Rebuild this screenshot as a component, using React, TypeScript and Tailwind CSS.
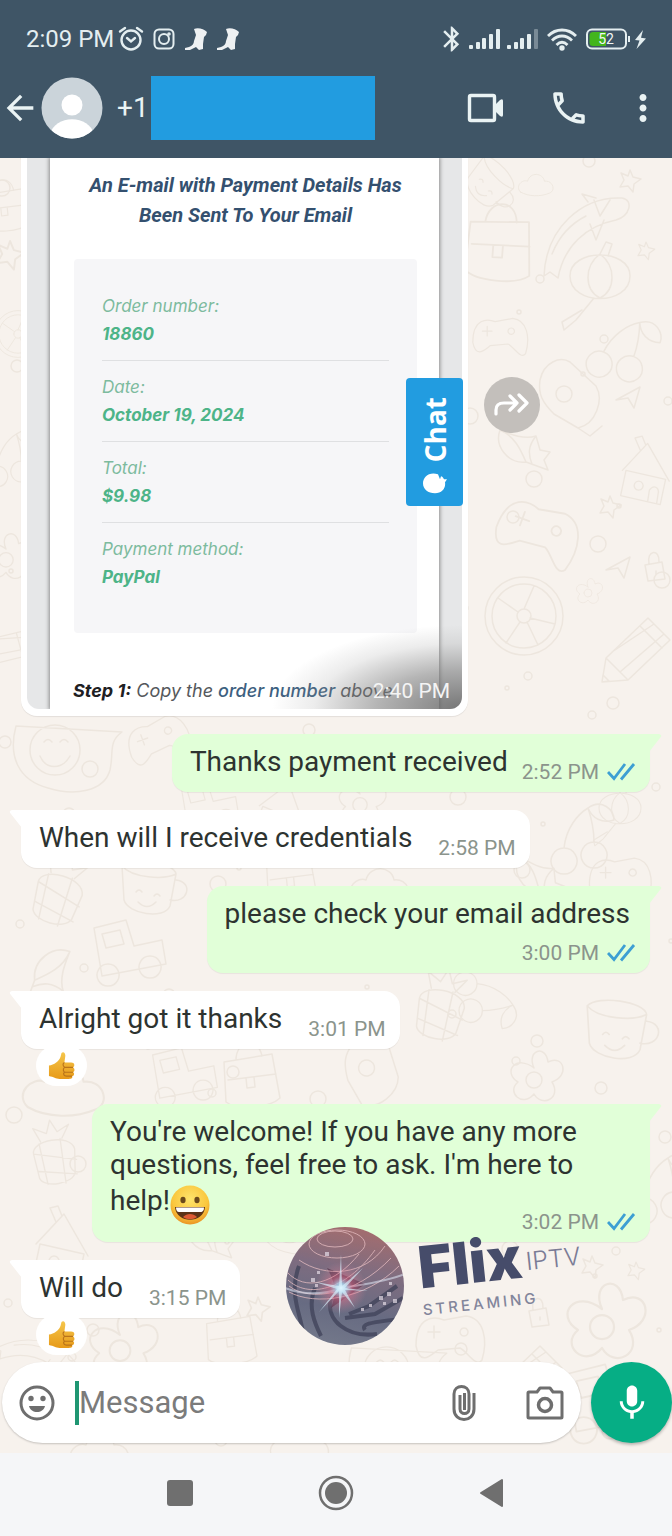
import type { ReactNode } from 'react';
import { MdArrowBack, MdBluetooth, MdMic, MdMoreVert, MdOutlinePhone } from 'react-icons/md';
import clsx from 'clsx';

type Message = {
  text: string;
  time: string;
  from: 'me' | 'them';
  layout?: 'inline' | 'below' | 'overlap';
  reaction?: boolean;
  smile?: boolean;
};

const messages: Message[] = [
  { text: 'Thanks payment received', time: '2:52 PM', from: 'me' },
  { text: 'When will I receive credentials', time: '2:58 PM', from: 'them' },
  { text: 'please check your email address', time: '3:00 PM', from: 'me', layout: 'below' },
  { text: 'Alright got it thanks', time: '3:01 PM', from: 'them', reaction: true },
  {
    text: "You're welcome! If you have any more questions, feel free to ask. I'm here to help!",
    time: '3:02 PM',
    from: 'me',
    layout: 'overlap',
    smile: true,
  },
  { text: 'Will do', time: '3:15 PM', from: 'them', reaction: true },
];

const order = [
  { label: 'Order number:', value: '18860' },
  { label: 'Date:', value: 'October 19, 2024' },
  { label: 'Total:', value: '$9.98' },
  { label: 'Payment method:', value: 'PayPal' },
];

// Line doodles for the wallpaper, each drawn around 0,0
const doodles: Record<string, string> = {
  fish: 'M-38 42 C-36 -6 0 -38 40 -36 C52 -34 48 -18 34 -14 C4 -8 -18 12 -24 44 L-32 38Z M6 -32 L0 -40 L14 -36 M22 -14 L14 6 L8 -10 M12 -34 L18 -18 L28 -34 M-30 20 C-22 0 -8 -12 4 -18',
  pumpkin: 'M-30 0 C-30 -28 30 -28 30 0 C30 30 -30 30 -30 0Z M0 -22 C-16 -10 -16 14 0 22 M0 -22 C16 -10 16 14 0 22 M0 -22 L6 -34 L12 -32 L8 -20 M-6 22 L-24 44 L-36 54 L-38 46 L-18 34',
  mask: 'M-28 -14 C-24 -32 -8 -38 2 -32 L28 -8 C36 6 28 30 10 34 L-14 20 C-26 8 -30 0 -28 -14Z M10 34 L22 42 L34 32 M-4 0 m-8 0 a8 8 0 1 0 16 0 a8 8 0 1 0 -16 0',
  house: 'M-24 -4 L4 -34 L28 8 M-20 -4 L-26 24 L18 34 L24 6 L-20 -4Z M-6 8 a5 5 0 1 0 .1 0Z M4 31 L6 18 C10 12 16 14 16 20 L14 33 M-4 -26 L-10 -40 L-2 -42 L2 -32',
  wheel: 'M-39 0 a39 39 0 1 0 78 0 a39 39 0 1 0 -78 0 M-32 0 a32 32 0 1 0 64 0 a32 32 0 1 0 -64 0 M-7 0 a7 7 0 1 0 14 0 a7 7 0 1 0 -14 0 M-6 -4 L-26 -18 M0 -7 L10 -30 M6 2 L31 8 M3 6 L14 29 M-4 6 L-18 27',
  pencil: 'M-34 32 L-30 8 L12 -32 L34 -10 L-8 30 L-34 32Z M-30 8 L-8 30 M4 -24 L26 -2 M-24 2 L18 -26 M-16 22 L28 -16 M-34 32 L-33 25 L-27 31Z',
  smiley: 'M-54 -28 L52 -22 C38 -12 44 -2 40 16 C34 38 4 42 -22 34 C-52 26 -62 2 -54 -28Z M-40 -4 a25 25 0 1 0 50 0 a25 25 0 1 0 -50 0 M-30 2 C-24 16 -8 16 0 2 M-26 -12 q4 -5 8 0 M-10 -12 q4 -5 8 0',
  controller: 'M-34 8 C-34 -22 -16 -22 -6 -18 L16 -22 C34 -20 38 2 32 22 C26 30 18 14 10 10 L-12 12 C-20 18 -30 28 -34 8Z M-22 -6 L-10 -6 M-16 -12 L-16 0 M14 -10 a4 4 0 1 0 .1 0Z',
  pineapple: 'M-22 -6 C-22 -22 22 -22 24 -4 L20 22 C16 34 -16 34 -20 22Z M-22 -6 L24 8 M-20 14 L22 24 M-14 -16 L-12 30 M10 -18 L8 32 M-12 -18 L-18 -34 L-4 -26 L2 -40 L8 -26 L22 -32 L12 -18',
  cup: 'M-28 -22 C-18 -32 24 -26 26 -14 L20 18 C14 32 -22 26 -26 12Z M-28 -22 C-18 -10 14 -8 26 -14 M26 -8 C44 -6 38 16 20 12 M-14 4 q3 -4 6 0 M4 8 q3 -4 6 0 M-12 14 C-6 20 0 20 6 14',
  bag: 'M-26 -16 L22 -24 L30 20 C20 30 -14 32 -24 24Z M-14 -18 C-14 -38 8 -42 12 -22 M-22 2 L26 -4 M-4 0 L-3 10 L5 9 L4 -1',
  flower: 'M0 -10 C-8 -28 12 -34 14 -16 C30 -24 36 -2 18 4 C28 20 8 30 0 16 C-12 30 -28 14 -16 4 C-32 -6 -18 -24 0 -10Z M-8 2 a8 8 0 1 0 16 0 a8 8 0 1 0 -16 0',
  cherry: 'M-16 10 a13 13 0 1 0 .1 0Z M14 4 a13 13 0 1 0 .1 0Z M-16 10 C-14 -10 -2 -24 8 -30 C12 -18 14 -8 14 4 M8 -30 C22 -40 34 -28 34 -18 C22 -14 12 -20 8 -30',
  bulldozer: 'M-36 -20 L-4 -28 L4 -2 L32 -8 L36 16 L-28 28Z M-22 16 a11 11 0 1 0 .1 0Z M20 8 a11 11 0 1 0 .1 0Z M-28 -14 L-10 -18 L-6 -4 L-24 0Z',
  cloud: 'M-26 10 C-36 0 -22 -12 -14 -8 C-10 -24 12 -22 14 -8 C28 -10 34 8 22 12 C8 18 -12 18 -26 10Z',
  shell: 'M-24 -18 C-30 -2 -16 16 2 14 L24 22 L20 12 L26 4 L16 2 L12 -12 C0 -8 -14 -14 -24 -18Z M-24 -18 C-10 -12 -4 0 2 14 M12 -12 C4 -2 4 6 8 16',
  star: 'M0 -10 L3 -3 L11 -1 L4 4 L3 12 L-2 6 L-10 7 L-6 0 L-9 -7 L-2 -4Z',
  lock: 'M-9 -3 L8 -6 L11 11 L-6 13Z M-5 -4 C-8 -18 6 -20 5 -6 M2 3 l0 3',
  plane: 'M-12 4 L12 -9 L6 12 L0 2Z',
};

const placed: [string, number, number, number, number][] = [
  ['fish', 582, 76, 0, 1], ['pumpkin', 600, 118, 0, 1], ['mask', 568, 236, 0, 1], ['house', 644, 316, 0, 0.9],
  ['wheel', 524, 458, 0, 1], ['pencil', 636, 492, 0, 1], ['bag', 498, 88, 10, 1.2], ['controller', 500, 178, 0, 0.8],
  ['cherry', 622, 190, 20, 1], ['shell', 524, 290, 0, 1], ['controller', 538, 374, 20, 1.2], ['cloud', 536, 28, 0, 0.6],
  ['lock', 654, 410, 0, 1], ['plane', 628, 238, 0, 1], ['plane', 618, 408, 0, 1], ['flower', 588, 434, 0, 0.5],
  ['star', 610, 348, 0, 1], ['star', 630, 22, 0, 1], ['star', 646, 92, 0, 0.8], ['cup', 490, 26, 40, 0.8],
  ['smiley', 70, 596, 0, 1], ['bag', 4, 50, 0, 0.8], ['star', 10, 96, 0, 1.3], ['wheel', 18, 176, 0, 0.6],
  ['cherry', 10, 300, 0, 0.8], ['flower', 6, 400, 0, 0.9], ['pencil', 4, 490, 30, 0.8], ['controller', 158, 582, -20, 0.9],
  ['bulldozer', 210, 645, 0, 0.8], ['pineapple', 58, 735, 15, 1], ['cup', 150, 730, 0, 1], ['bulldozer', 130, 790, 0, 1],
  ['shell', 50, 820, 90, 1.1], ['house', 280, 655, 10, 0.9], ['flower', 360, 645, 0, 0.9], ['cherry', 580, 680, 0, 1],
  ['pumpkin', 620, 650, 0, 0.7], ['shell', 540, 720, 10, 1], ['controller', 620, 720, 0, 0.9], ['bag', 290, 720, 0, 0.9],
  ['cloud', 380, 730, 0, 1], ['cup', 618, 872, 0, 1.1], ['flower', 534, 920, 0, 1], ['cherry', 486, 840, 90, 0.9],
  ['pineapple', 440, 850, 10, 1], ['mask', 370, 912, 30, 1], ['bag', 250, 920, 0, 1], ['bulldozer', 185, 915, 0, 0.9],
  ['cloud', 64, 935, 0, 1.4], ['pineapple', 54, 998, -10, 0.9], ['house', 60, 1090, 0, 1], ['star', 258, 1150, 0, 1.1],
  ['smiley', 300, 1070, 0, 0.7], ['shell', 210, 1080, 0, 0.9], ['flower', 120, 1190, 0, 1.3], ['bag', 230, 1180, 0, 0.9],
  ['flower', 602, 1166, 0, 1.5], ['star', 592, 1108, 0, 1], ['star', 636, 1112, 0, 0.8], ['lock', 538, 1156, 0, 1],
  ['cherry', 660, 1030, 0, 1], ['controller', 450, 1180, 0, 1], ['smiley', 400, 1215, 0, 0.9], ['pencil', 528, 1220, 0, 1],
  ['bulldozer', 610, 1240, 0, 1.2], ['fish', 40, 1200, 60, 0.8], ['cloud', 300, 1290, 0, 1], ['cloud', 100, 1295, 0, 1],
];

const dots = Array.from({ length: 120 }, (_, i) => ({
  x: (i * 149 + 23) % 672,
  y: (i * 83 + ((i * i) % 31)) % 1300,
  r: 2 + (i % 4) * 2,
}));

function Wallpaper() {
  return (
    <svg className="absolute inset-0 h-full w-full" viewBox="0 0 672 1295" preserveAspectRatio="xMidYMin slice" fill="none" aria-hidden="true">
      <g stroke="#ede6de" strokeWidth="1.5" strokeLinejoin="round" strokeLinecap="round">
        {placed.map(([name, x, y, r, s], i) => (
          <path key={i} d={doodles[name]} transform={`translate(${x} ${y}) rotate(${r}) scale(${s})`} />
        ))}
        {dots.map((d, i) => (
          <circle key={i} cx={d.x} cy={d.y} r={d.r} />
        ))}
      </g>
    </svg>
  );
}

function Signal({ weak }: { weak?: boolean }) {
  return (
    <svg width="32" height="22" viewBox="0 0 32 22" fill="#e4eef0" aria-hidden="true">
      <rect x="0" y="17" width="4" height="4" rx="1" />
      <rect x="7" y="14" width="4" height="7" rx="1" />
      <rect x="13" y="10" width="4" height="11" rx="1" />
      <rect x="20" y="6" width="4" height="15" rx="1" />
      <rect x="27" y="1" width="4" height="20" rx="1" opacity={weak ? 0.35 : 1} />
    </svg>
  );
}

function Boot() {
  return (
    <svg width="22" height="24" viewBox="0 0 22 24" fill="#eef1f3" aria-hidden="true">
      <path d="M9 2 C13 0 19 2 22 5 L21 8 L19 10 L18 17 L18 22 L14 23 L11 20 L5 23 L0 23 L0 21 L4 20 C7 19 9 17 9 14 L11 8Z" />
    </svg>
  );
}

function StatusBar() {
  return (
    <div className="flex h-[76px] items-center justify-between pl-[26px] pr-[25px] pt-0.5 text-[#e4eef0]">
      <div className="flex items-center">
        <span className="text-2xl leading-[30px]">2:09 PM</span>
        <svg className="ml-1" width="26" height="26" viewBox="0 0 26 26" fill="none" stroke="currentColor" strokeWidth="2.4" strokeLinecap="round" aria-hidden="true">
          <circle cx="13" cy="14" r="9.5" />
          <path d="M9 12 L13 15.500 L17 12" />
          <path d="M2 5.500 L7 2 M24 5.500 L19 2" />
        </svg>
        <svg className="ml-[9px]" width="22" height="22" viewBox="0 0 22 22" fill="none" stroke="currentColor" strokeWidth="2" aria-hidden="true">
          <rect x="1.500" y="1.500" width="19" height="19" rx="4.500" />
          <circle cx="11" cy="11" r="5" />
          <circle cx="16" cy="6" r="0.800" />
        </svg>
        <div className="ml-2.5 flex gap-2.5">
          <Boot />
          <Boot />
        </div>
      </div>
      <div className="flex items-center">
        <MdBluetooth size={30} />
        <span className="ml-0.5 flex gap-1.5">
          <Signal />
          <Signal weak />
        </span>
        <svg className="ml-2" width="30" height="23" viewBox="0 0 30 23" fill="none" stroke="currentColor" strokeWidth="2.800" aria-hidden="true">
          <path d="M1 8 C9 0 21 0 29 8 M5 12.500 C11 6.500 19 6.500 25 12.500 M9.500 17 C13 13.500 17 13.500 20.500 17" />
          <circle cx="15" cy="20" r="1.300" fill="currentColor" />
        </svg>
        <svg className="ml-2" width="62" height="24" viewBox="0 0 62 24" aria-hidden="true">
          <rect x="2" y="2.500" width="39" height="19" rx="5" fill="none" stroke="#e4eef0" strokeWidth="2" />
          <path d="M8 5 H21 V19 H8 Q4.500 19 4.500 15.500 V8.500 Q4.500 5 8 5Z" fill="#43b51d" />
          <path d="M43 9 h2 v6 h-2z M58 3 L50 13 L54.500 13.500 L51.500 22 L61 11.500 L56 10.800Z" fill="#e4eef0" />
          <text x="21" y="17" textAnchor="middle" fontSize="14" fill="#f2f6f4">52</text>
        </svg>
      </div>
    </div>
  );
}

function AppBar() {
  return (
    <div className="flex h-16 items-center pr-2 text-[#eaf3f4]">
      <button type="button" aria-label="Back">
        <MdArrowBack size={40} />
      </button>
      <svg className="ml-px" width="62" height="62" viewBox="0 0 62 62" role="img" aria-label="Contact photo">
        <clipPath id="avatar"><circle cx="31" cy="31" r="30.500" /></clipPath>
        <g clipPath="url(#avatar)">
          <rect width="62" height="62" fill="#cbd4da" />
          <circle cx="31" cy="28" r="10.500" fill="#fff" />
          <path d="M9 58 C13 37 49 37 53 58 V62 H9Z" fill="#fff" />
        </g>
      </svg>
      <span className="ml-[14px] text-[28px] leading-8">+1</span>
      <div className="ml-0.5 h-16 w-56 bg-[#229ce0]" />
      <div className="ml-auto flex items-center">
        <button type="button" aria-label="Video call">
          <svg width="38" height="32" viewBox="0 0 38 32" fill="none" aria-hidden="true">
            <rect x="2.500" y="3.500" width="25" height="25" rx="1.500" stroke="currentColor" strokeWidth="3.400" />
            <path d="M28 13 L33 8 Q36 6 36 9 V23 Q36 26 33 24 L28 19Z" fill="currentColor" />
          </svg>
        </button>
        <button type="button" aria-label="Call" className="ml-[43px]">
          <MdOutlinePhone size={42} />
        </button>
        <button type="button" aria-label="More options" className="ml-8">
          <MdMoreVert size={42} />
        </button>
      </div>
    </div>
  );
}

function PaymentPhoto() {
  return (
    <div className="relative w-[447px] rounded-b-2xl bg-white px-1.5 pb-[7px] shadow-[0_1px_1px_rgba(0,0,0,0.08)]">
      <div className="relative overflow-hidden rounded-b-xl bg-[#e6e7e8] px-[23px] font-['Inter','Roboto',sans-serif]">
        <div className="bg-white pb-1 pl-6 pr-[22px] pt-3 shadow-[0_0_4px_1px_rgba(0,0,0,0.4)]">
          <h2 className="text-center font-['Roboto',sans-serif] text-xl font-bold italic leading-[30px] text-[#34506f]">
            An E-mail with Payment Details Has Been Sent To Your Email
          </h2>
          <dl className="mt-[29px] rounded bg-[#f6f6f8] px-7 pb-[42px] pt-[33px]">
            {order.map((row, i) => (
              <div key={row.label} className={clsx('text-[17px] italic leading-7', i < order.length - 1 && 'mb-3 border-b border-[#dfe0e2] pb-3')}>
                <dt className="text-[#7dbb9e]">{row.label}</dt>
                <dd className="font-bold text-[#4db488]">{row.value}</dd>
              </div>
            ))}
          </dl>
          <p className="-mx-px mt-11 whitespace-nowrap text-lg italic leading-7 text-[#55585c]">
            <strong className="text-[#1e2023]">Step 1:</strong> Copy the <span className="font-medium text-[#3d5f80]">order number</span> above
          </p>
        </div>
        <div className="absolute inset-0 bg-[radial-gradient(ellipse_190px_84px_at_bottom_right,rgba(90,90,90,0.8)_0%,rgba(120,120,120,0.55)_45%,rgba(150,150,150,0.18)_78%,rgba(160,160,160,0)_100%)]" />
        <time className="absolute bottom-1.5 right-3 font-['Roboto',sans-serif] text-[21px] leading-6 text-[#f4f4f4]">2:40 PM</time>
      </div>
      <button type="button" className="absolute right-[5px] top-[220px] flex h-32 w-[57px] items-center justify-center rounded bg-[#229ce0] pt-2 text-white">
        <span className="flex rotate-180 items-center gap-2.5 font-['Open_Sans','Noto_Sans',sans-serif] text-[28px] font-bold leading-10 [writing-mode:vertical-rl]">
          <svg width="24" height="22" viewBox="0 0 24 22" fill="currentColor" aria-hidden="true">
            <path d="M12 1 C5 1 1 6 2 12 L0 15 L3 15 C4 17 5 18 6 18 L7 15 L9 20 C18 23 24 17 24 11 C24 5 19 1 12 1Z" />
          </svg>
          Chat
        </span>
      </button>
    </div>
  );
}

function ForwardButton() {
  return (
    <button type="button" aria-label="Forward" className="mt-[219px] flex h-14 w-14 items-center justify-center rounded-full bg-[#c3bfbb] text-white">
      <svg width="36" height="24" viewBox="0 0 36 24" fill="none" stroke="currentColor" strokeWidth="3.200" strokeLinecap="round" strokeLinejoin="round" aria-hidden="true">
        <path d="M2 21 V17 C2 11 6 10 10 10 H23 M16 3 L23 10 L16 17 M25 2 L33 10 L25 18" />
      </svg>
    </button>
  );
}

function ThumbsUp() {
  return (
    <svg width="27" height="29" viewBox="0 0 28 30" aria-label="Thumbs up" role="img">
      <defs>
        <linearGradient id="thumb" x1="0" y1="0" x2="0" y2="1">
          <stop offset="0" stopColor="#f5c64b" />
          <stop offset="1" stopColor="#e79a19" />
        </linearGradient>
      </defs>
      <path d="M1 15 C6 15 12 10 13 6 L14 2 C16 0 18 2 18 5 L17 12 H24 C28 12 28 16 26 17 C28 18 28 21 26 22 C28 23 27 26 25 26 C26 29 23 29 21 29 H12 C8 29 6 27 1 26Z" fill="url(#thumb)" />
      <path d="M17 12 C15 13 15 16 18 17 H26 M17 17 C15 19 16 22 18 22 H26 M17 22 C15 24 17 26 19 26 H25" fill="none" stroke="#b9731a" strokeWidth="1.200" />
    </svg>
  );
}

function Grin() {
  return (
    <svg className="mt-1 inline-block align-middle" width="40" height="40" viewBox="0 0 40 40" role="img" aria-label="Grinning face">
      <defs>
        <radialGradient id="grin" cx="0.500" cy="0.350" r="0.650">
          <stop offset="0" stopColor="#fde46c" />
          <stop offset="0.700" stopColor="#fac63c" />
          <stop offset="1" stopColor="#ea9325" />
        </radialGradient>
      </defs>
      <circle cx="20" cy="20" r="19.500" fill="url(#grin)" />
      <ellipse cx="13" cy="15" rx="2.600" ry="3.200" fill="#6b4a1c" />
      <ellipse cx="27" cy="15" rx="2.600" ry="3.200" fill="#6b4a1c" />
      <path d="M5 22 H35 C34 39 6 39 5 22Z" fill="#5c3318" />
      <path d="M6 22.500 H34 C34 26 32 27 31 27 H9 C7 27 6 25 6 22.500Z" fill="#fff" />
      <path d="M13 32 C17 28 23 28 27 32 C23 35 17 35 13 32Z" fill="#dd5a34" />
    </svg>
  );
}

function Ticks() {
  return (
    <svg width="29" height="20" viewBox="0 0 29 20" fill="none" stroke="#3d9fd3" strokeWidth="2.800" aria-hidden="true">
      <path d="M1 10 L7 16.500 L18 2 M14 17.500 L27 2" />
    </svg>
  );
}

function Bubble({ mine, children }: { mine: boolean; children: ReactNode }) {
  return (
    <div
      className={clsx(
        'relative rounded-2xl pb-[7px] pl-[18px] pr-3.5 pt-[11px] shadow-[0_1px_1px_rgba(0,0,0,0.06)]',
        mine ? 'rounded-tr-none bg-[#e1ffd8]' : 'rounded-tl-none bg-white',
      )}
    >
      <svg
        className={clsx('absolute top-0', mine ? '-right-3 text-[#e1ffd8]' : '-left-3 -scale-x-100 text-white')}
        width="13"
        height="18"
        viewBox="0 0 13 18"
        fill="currentColor"
        aria-hidden="true"
      >
        <path d="M0 0 H10 Q14 1 11 4 L0 18Z" />
      </svg>
      {children}
    </div>
  );
}

function MessageRow({ message }: { message: Message }) {
  const { layout = 'inline' } = message;
  const mine = message.from === 'me';
  return (
    <li className={clsx('flex max-w-[558px] flex-col', mine ? 'items-end self-end' : 'items-start')}>
      <Bubble mine={mine}>
        <div className={clsx('flex', layout === 'inline' ? 'items-end' : 'flex-col', layout === 'inline' && (mine ? 'gap-3.5' : 'gap-[26px]'))}>
          <p className={clsx('text-[28px] leading-[33px] text-[#2d3330]', layout === 'below' ? 'mb-2.5 pr-1.5' : layout === 'inline' && 'mb-[7px]')}>
            {message.text}
            {message.smile && <Grin />}
          </p>
          <div className={clsx('flex shrink-0 items-center gap-2 self-end', layout === 'overlap' && '-mt-4')}>
            <time className="text-[21px] leading-[26px] text-[#8b948c]">{message.time}</time>
            {mine && <Ticks />}
          </div>
        </div>
      </Bubble>
      {message.reaction && (
        <span className="relative -mt-1 ml-[15px] flex h-[41px] w-[51px] items-center justify-center rounded-full bg-white">
          <ThumbsUp />
        </span>
      )}
    </li>
  );
}

function Sphere() {
  return (
    <svg width="120" height="120" viewBox="0 0 120 120" aria-hidden="true">
      <defs>
        <linearGradient id="ball" x1="0.600" y1="0" x2="0.400" y2="1">
          <stop offset="0" stopColor="#a56e6e" />
          <stop offset="0.350" stopColor="#806d80" />
          <stop offset="0.700" stopColor="#676b82" />
          <stop offset="1" stopColor="#73788a" />
        </linearGradient>
        <radialGradient id="flare">
          <stop offset="0" stopColor="#e8fbff" />
          <stop offset="0.180" stopColor="#a9cfe8" stopOpacity="0.900" />
          <stop offset="0.450" stopColor="#e5708c" stopOpacity="0.500" />
          <stop offset="1" stopColor="#c98a9a" stopOpacity="0" />
        </radialGradient>
        <clipPath id="ballClip"><circle cx="60" cy="60" r="59" /></clipPath>
      </defs>
      <g clipPath="url(#ballClip)">
        <rect width="120" height="120" fill="url(#ball)" />
        <path d="M14 40 C4 66 14 84 18 106 M30 62 C22 80 30 98 36 110 M46 72 C40 94 62 112 92 108 M64 88 L84 80 L112 60 M60 92 L90 88 L118 72 M80 104 C74 96 96 96 120 92" fill="none" stroke="#3f4258" strokeWidth="4" opacity="0.750" />
        <path d="M42 42 L80 58 L46 82 C52 66 50 56 42 42Z" fill="#4a3048" opacity="0.800" />
        <g fill="none" stroke="#e8bfc3" strokeWidth="1" opacity="0.750">
          <ellipse cx="50" cy="13" rx="18" ry="8" />
          <ellipse cx="52" cy="18" rx="28" ry="14" />
          <path d="M2 46 C20 66 50 58 74 28 M3 54 C22 72 60 66 90 24 M4 60 C24 76 70 70 106 32 M4 66 C30 80 80 74 114 40 M14 34 C40 52 80 50 100 20" />
        </g>
        <path d="M0 62 C20 70 40 68 58 62 C80 58 100 56 120 48" fill="none" stroke="#d8dfee" strokeWidth="2" opacity="0.600" />
        <g fill="#e4dce6" opacity="0.700">
          <path d="M26 52h4v4h-4z M32 45h3v3h-3z M40 26h4v4h-4z M30 58h3v3h-3z M94 70h4v4h-4z M102 66h4v4h-4z M98 76h3v3h-3z M108 73h4v4h-4z M84 78h3v3h-3z M76 82h3v3h-3z M104 56h3v3h-3z" />
        </g>
        <circle cx="56" cy="62" r="26" fill="url(#flare)" />
        <path d="M56 28 L57 60 L78 42 L60 62 L84 65 L60 64 L70 82 L57 66 L54 92 L54 65 L34 86 L52 63 L30 56 L54 60Z" fill="#d9f2ff" opacity="0.650" />
      </g>
    </svg>
  );
}

function Watermark() {
  return (
    <div className="pointer-events-none absolute bottom-4 left-[285px] flex items-start gap-3.5 text-[#464c6a]">
      <Sphere />
      <div className="mt-0.5 -rotate-6 font-['Inter',sans-serif]">
        <div className="flex items-start">
          <span className="text-[58px] font-black leading-[62px]">Flix</span>
          <span className="ml-1 mt-5 text-[25px] font-light leading-8 text-[#7b7c96]">IPTV</span>
        </div>
        <div className="mt-1 text-[15px] font-medium leading-4 tracking-[0.2em] text-[#82859b]">STREAMING</div>
      </div>
    </div>
  );
}

function Composer() {
  return (
    <form className="relative flex items-center gap-2.5 pb-2.5 pl-0.5">
      <div className="flex h-[81px] min-w-0 flex-1 items-center rounded-full bg-white px-4 text-[#6e6e6e] shadow-[0_1px_2px_rgba(0,0,0,0.2)]">
        <button type="button" aria-label="Emoji">
          <svg width="38" height="38" viewBox="0 0 38 38" fill="none" aria-hidden="true">
            <circle cx="19" cy="19" r="16" stroke="currentColor" strokeWidth="3" />
            <circle cx="13" cy="14.500" r="2.700" fill="currentColor" />
            <circle cx="25" cy="14.500" r="2.700" fill="currentColor" />
            <path d="M11 22 H27 C25 30 13 30 11 22Z" fill="currentColor" />
          </svg>
        </button>
        <span className="ml-[19px] h-11 w-1 bg-[#1f9672]" />
        <input
          type="text"
          aria-label="Message"
          placeholder="Message"
          className="min-w-0 flex-1 bg-transparent text-[31px] leading-9 outline-none placeholder:text-[#7b7b7b]"
        />
        <button type="button" aria-label="Attach file">
          <svg width="24" height="38" viewBox="0 0 24 38" fill="none" stroke="currentColor" strokeWidth="3" aria-hidden="true">
            <path d="M22 9 V25 C22 39 2 39 2 25 V10 C2 0 17 0 17 10 V25 C17 31 8 31 8 25 V11 M12.500 9 V26" />
          </svg>
        </button>
        <button type="button" aria-label="Camera" className="ml-[49px]">
          <svg width="40" height="38" viewBox="0 0 40 38" fill="none" stroke="currentColor" strokeWidth="3" strokeLinejoin="round" aria-hidden="true">
            <path d="M4 8 H12 L15 4 H25 L28 8 H36 Q37 8 37 9 V33 Q37 34 36 34 H4 Q3 34 3 33 V9 Q3 8 4 8Z" />
            <circle cx="20" cy="21" r="6.500" strokeWidth="3.500" />
          </svg>
        </button>
      </div>
      <button type="button" aria-label="Record voice message" className="flex h-[81px] w-[81px] shrink-0 items-center justify-center rounded-full bg-[#06ae85] text-white shadow-[0_2px_3px_rgba(0,0,0,0.25)]">
        <MdMic size={42} />
      </button>
    </form>
  );
}

function NavBar() {
  return (
    <nav className="flex h-[83px] items-center justify-center gap-[116px] bg-[#f5f6f8] pb-1 text-[#6f6f6f]">
      <button type="button" aria-label="Recent apps">
        <svg width="40" height="40" viewBox="0 0 40 40" fill="currentColor"><rect x="7" y="7" width="26" height="26" rx="3" /></svg>
      </button>
      <button type="button" aria-label="Home">
        <svg width="40" height="40" viewBox="0 0 40 40" fill="currentColor">
          <circle cx="20" cy="20" r="16" fill="none" stroke="currentColor" strokeWidth="2.500" />
          <circle cx="20" cy="20" r="11" />
        </svg>
      </button>
      <button type="button" aria-label="Go back">
        <svg width="40" height="40" viewBox="0 0 40 40" fill="currentColor" stroke="currentColor" strokeWidth="2" strokeLinejoin="round"><path d="M9 20 L30 7 V33Z" /></svg>
      </button>
    </nav>
  );
}

export default function App() {
  return (
    <div className="flex min-h-screen flex-col bg-[#f5f6f8] font-['Roboto',sans-serif]">
      <header className="bg-[#3f5566] pb-[18px]">
        <StatusBar />
        <AppBar />
      </header>
      <main className="relative flex flex-1 flex-col overflow-hidden bg-[#f7f2ed]">
        <Wallpaper />
        <div className="relative flex flex-1 flex-col pb-1.5">
          <div className="flex items-start gap-4 pl-[21px]">
            <PaymentPhoto />
            <ForwardButton />
          </div>
          <ul className="mt-[18px] flex flex-col gap-[18px] pl-[21px] pr-[22px]">
            {messages.map((message) => (
              <MessageRow key={message.time} message={message} />
            ))}
          </ul>
          <Watermark />
        </div>
        <Composer />
      </main>
      <NavBar />
    </div>
  );
}
